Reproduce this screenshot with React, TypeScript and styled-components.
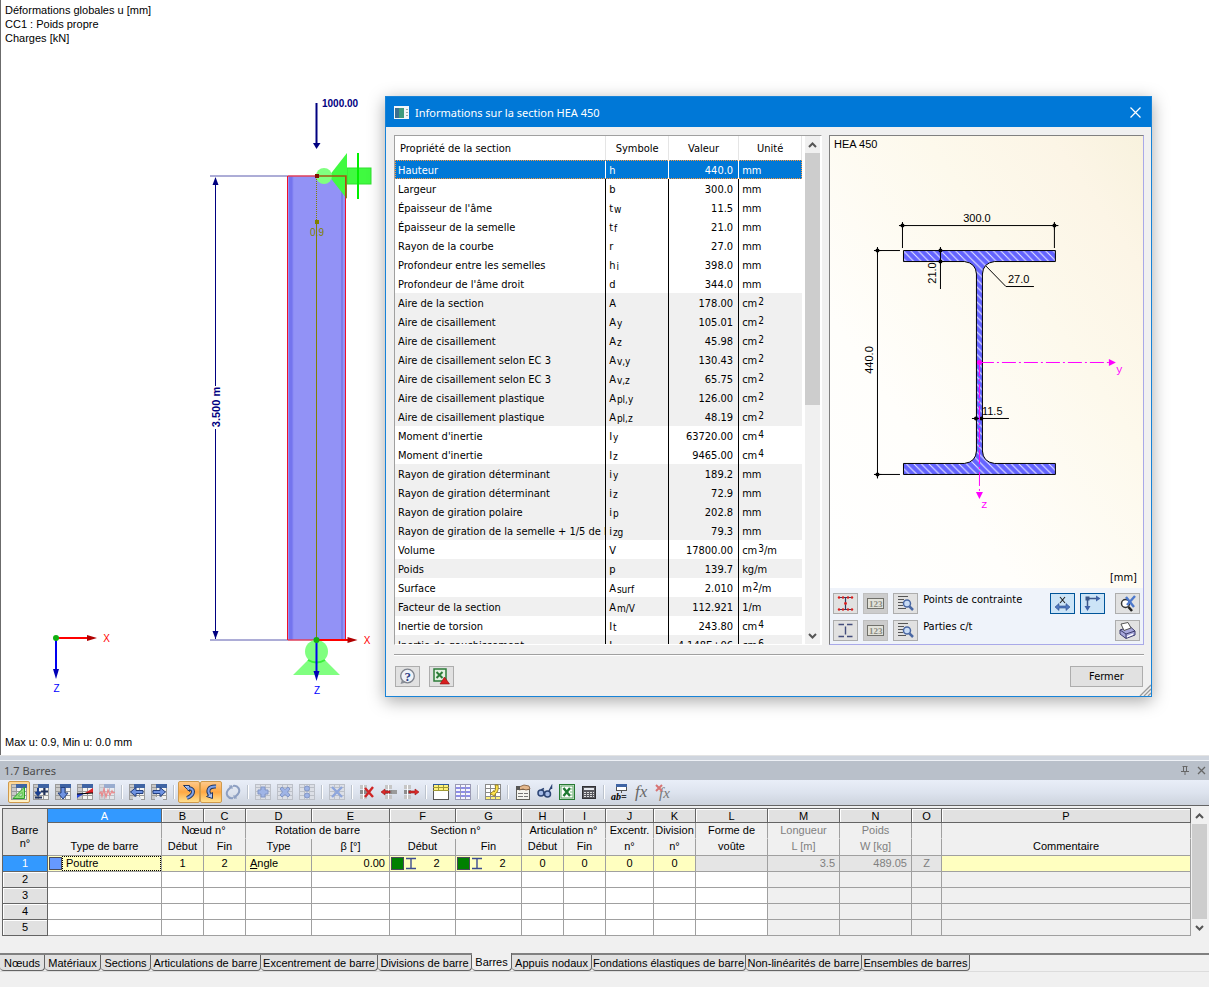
import React from "react";
import styled, { createGlobalStyle, css } from "styled-components";

const uiFont = `"DejaVu Sans Condensed", "Noto Sans", sans-serif`;
const titleFont = `"Noto Sans", "Open Sans", sans-serif`;
const gridFont = `"Liberation Sans", Arial, sans-serif`;

const GlobalStyle = createGlobalStyle`
  *, *::before, *::after { box-sizing: border-box; }
  body { margin: 0; background: #f0f0f0; font-family: ${gridFont}; font-size: 11px; color: #000; }
  button { font: inherit; color: inherit; padding: 0; margin: 0; }
  table { border-collapse: separate; border-spacing: 0; table-layout: fixed; }
  th { font-weight: normal; }
`;

/* ---------- page frame ---------- */

const Shell = styled.div`
  display: flex;
  flex-direction: column;
  min-height: 100vh;
`;

const Workspace = styled.main`
  position: relative;
  flex: 1;
  display: flex;
  flex-direction: column;
  justify-content: space-between;
  min-height: 755px;
  padding: 3px 4px 6px;
  background: #fff;
  border-left: 1px solid #6b6b6b;
`;

const ViewText = styled.p`
  margin: 0;
  line-height: 14px;
  white-space: pre-line;
`;

const ModelView = styled.svg`
  position: absolute;
  left: -1px;
  top: 0;
  font-family: ${gridFont};
  font-size: 11px;
`;

/* ---------- dialog window ---------- */

const Dialog = styled.section`
  position: absolute;
  left: 384px;
  top: 96px;
  width: 767px;
  display: flex;
  flex-direction: column;
  background: #f0f0f0;
  border: 1px solid #1883d7;
  box-shadow: 0 4px 16px rgba(0, 0, 0, 0.35);
  font-family: ${uiFont};
`;

const DialogTitle = styled.header`
  display: flex;
  align-items: center;
  gap: 6px;
  height: 30px;
  padding: 0 8px;
  background: #0078d7;
  color: #fff;
  font-family: ${titleFont};
  h1 {
    flex: 1;
    margin: 0;
    font-size: 11px;
    font-weight: normal;
  }
`;

const BareButton = styled.button<{ $w?: number; $h?: number }>`
  display: flex;
  align-items: center;
  justify-content: center;
  width: ${(p) => p.$w ?? 16}px;
  height: ${(p) => p.$h ?? 16}px;
  border: 0;
  background: none;
`;

const DialogBody = styled.div`
  display: flex;
  gap: 7px;
  height: 518px;
  padding: 8px 7px 0 8px;
`;

const DialogFooter = styled.footer`
  display: flex;
  gap: 9px;
  margin: 9px 7px 0 8px;
  padding: 11px 1px 9px;
  border-top: 1px solid #a0a0a0;
  box-shadow: inset 0 1px 0 #fff;
`;

const Push = styled.span`
  flex: 1;
`;

const ToolButton = styled.button<{ $on?: boolean; $wide?: boolean }>`
  display: flex;
  align-items: center;
  justify-content: center;
  width: ${(p) => (p.$wide ? 73 : 25)}px;
  height: 21px;
  border: 1px solid ${(p) => (p.$on ? "#005499" : "#adadad")};
  background: ${(p) => (p.$on ? "#cce4f7" : "#e1e1e1")};
  &:disabled {
    background: #cccccc;
    border-color: #bfbfbf;
  }
`;

const SizeGrip = styled.svg`
  position: absolute;
  right: 0;
  bottom: 0;
`;

const ListPane = styled.div`
  flex: 428;
  min-width: 0;
  display: flex;
  gap: 3px;
  overflow: hidden;
  padding-right: 1px;
  background: #fff;
  border: 1px solid #fff;
  border-top-color: #a0a0a0;
  border-left-color: #a0a0a0;
`;

const ListClip = styled.div`
  flex: 1;
  min-width: 0;
  overflow: hidden;
`;

const PropTable = styled.table`
  width: 100%;
  th {
    height: 24px;
    padding: 0;
    border-right: 1px solid #e5e5e5;
    text-align: center;
  }
  th:first-child {
    padding-left: 5px;
    text-align: left;
  }
  td {
    height: 19px;
    padding: 2px 5px 0 3px;
    line-height: 14px;
    border-right: 1px solid #000;
    white-space: nowrap;
    overflow: hidden;
  }
  td:first-child {
    padding-right: 0;
  }
  td:nth-child(3) {
    text-align: right;
  }
  td:last-child {
    border-right: 0;
  }
`;

const PropRow = styled.tr<{ $shade?: boolean; $sel?: boolean }>`
  background: ${(p) => (p.$shade ? "#f0f0f0" : "#fff")};
  ${(p) =>
    p.$sel &&
    css`
      background: #0078d7;
      color: #fff;
      outline: 1px dotted #ff9a3c;
      outline-offset: -1px;
      && td {
        border-right-color: #fff;
      }
    `}
`;

const Clip = styled.span`
  display: block;
  overflow: hidden;
`;

const Sub = styled.span`
  margin-left: 1px;
  font-size: 10px;
  line-height: 1px;
  vertical-align: -1px;
`;

const Sup = styled.span`
  margin-left: 1px;
  font-size: 10px;
  line-height: 1px;
  vertical-align: 2px;
`;

const ScrollTrack = styled.div`
  flex: none;
  display: flex;
  flex-direction: column;
  width: 15px;
  background: #f0f0f0;
`;

const ScrollThumb = styled.div<{ $share: number }>`
  flex: ${(p) => p.$share};
  background: #cdcdcd;
`;

const ScrollRest = styled.div<{ $share: number }>`
  flex: ${(p) => p.$share};
`;

const GraphicPane = styled.div`
  flex: 315;
  min-width: 0;
  display: flex;
  flex-direction: column;
  border: 1px solid #a9a9e8;
  border-top-color: #808080;
  border-left-color: #808080;
`;

const Canvas = styled.div`
  flex: 1;
  min-height: 0;
  background: linear-gradient(to top right, #ffffff 0%, #fffefb 30%, #fdf9ec 65%, #fcf5e6 85%, #f8f2de 100%);
  svg {
    display: block;
    width: 100%;
    height: 100%;
  }
`;

const Controls = styled.div`
  display: flex;
  flex-direction: column;
  gap: 6px;
  padding: 5px 3px 3px;
  background: #eff3fa;
`;

const ControlRow = styled.div`
  display: flex;
  gap: 5px;
`;

const ControlLabel = styled.span`
  flex: 1;
  line-height: 13px;
`;

const ControlGap = styled.span`
  width: 0;
`;

/* ---------- table panel ---------- */

const Panel = styled.section`
  flex: none;
  background: #f0f0f0;
`;

const Splitter = styled.div`
  height: 6px;
  background: #cfd5de;
  border-top: 1px solid #e3e3e3;
  border-bottom: 1px solid #eef1f6;
`;

const PanelTitle = styled.header`
  display: flex;
  align-items: center;
  height: 19px;
  padding: 0 0 0 4px;
  background: #b9c0ca;
  color: #4c4c4c;
  font-family: ${titleFont};
  h2 {
    flex: 1;
    margin: 0;
    font-size: 11px;
    font-weight: normal;
  }
`;

const Toolbar = styled.div`
  display: flex;
  align-items: center;
  height: 26px;
  padding: 0 0 1px 8px;
  background: linear-gradient(#e9eef8, #dde3ee 50%, #cdd3dd);
  border-bottom: 1px solid #646464;
`;

const BarButton = styled.button<{ $on?: "pale" | "deep" }>`
  display: flex;
  align-items: center;
  justify-content: center;
  width: 22px;
  height: 22px;
  border: 1px solid transparent;
  border-radius: 2px;
  background: none;
  ${(p) =>
    p.$on &&
    css`
      border-color: #cf9a4c;
      background: ${p.$on === "pale" ? "linear-gradient(#ffd591, #fff3c8)" : "linear-gradient(#ffc98a, #ffa843 50%, #ffe08f)"};
    `}
`;

const BarRule = styled.span`
  width: 2px;
  height: 14px;
  margin: 0 3px;
  background: #bcc3cd;
  border-right: 1px solid #fff;
`;

const GridWrap = styled.div`
  display: flex;
  gap: 1px;
  padding: 2px 2px 0 2px;
`;

const DataGrid = styled.table`
  flex: 1;
  min-width: 0;
  border-left: 1px solid #646464;
  border-top: 1px solid #646464;
  line-height: 13px;
  white-space: nowrap;
  th,
  td {
    height: 16px;
    padding: 0;
    overflow: hidden;
    text-align: center;
    border-right: 1px solid #a0a0a0;
    border-bottom: 1px solid #a0a0a0;
  }
`;

const Letter = styled.th<{ $on?: boolean }>`
  && {
    height: 14px;
    line-height: 12px;
    background: ${(p) => (p.$on ? "#3399ff" : "#e1e1e1")};
    color: ${(p) => (p.$on ? "#fff" : "#000")};
    border-color: #646464;
    box-shadow: inset 1px 1px 0 ${(p) => (p.$on ? "#3399ff" : "#fff")};
  }
`;

const CornerHead = styled.th`
  && {
    padding-top: 10px;
    background: #e1e1e1;
    border-color: #646464;
    white-space: pre-line;
  }
`;

const Head = styled.th<{ $low?: boolean; $dim?: boolean }>`
  && {
    height: ${(p) => (p.$low ? 17 : 16)}px;
    padding-bottom: ${(p) => (p.$low ? 2 : 0)}px;
    background: #f0f0f0;
    color: ${(p) => (p.$dim ? "#808080" : "#000")};
    ${(p) => !p.$low && "border-bottom-color: #f0f0f0;"}
  }
`;

const RowHead = styled.th<{ $on?: boolean }>`
  && {
    background: ${(p) => (p.$on ? "#3399ff" : "#e1e1e1")};
    color: ${(p) => (p.$on ? "#fff" : "#000")};
    border-color: #646464;
    box-shadow: inset 1px 1px 0 ${(p) => (p.$on ? "#3399ff" : "#fff")};
  }
`;

const Cell = styled.td<{ $tone?: "edit" | "lock" | "void"; $right?: boolean }>`
  && {
    background: ${(p) => ({ edit: "#ffffc0", lock: "#e5e5e5", void: "#f0f0f0", blank: "#fff" })[p.$tone ?? "blank"]};
    color: ${(p) => (p.$tone === "lock" ? "#808080" : "#000")};
    ${(p) => p.$right && "text-align: right; padding-right: 4px;"}
  }
`;

const CellFlex = styled.div`
  display: flex;
  align-items: center;
  height: 15px;
`;

const Swatch = styled.span<{ $c: string }>`
  flex: none;
  width: 13px;
  height: 13px;
  margin-left: 1px;
  background: ${(p) => p.$c};
  border: 1px solid #4a4a5a;
`;

const FocusText = styled.span`
  flex: 1;
  height: 15px;
  padding-left: 3px;
  text-align: left;
  border: 1px dotted #000;
`;

const SectionNo = styled.span`
  flex: 1;
`;

const LeftText = styled.div`
  padding-left: 4px;
  text-align: left;
`;

const TabStrip = styled.nav`
  display: flex;
  align-items: flex-start;
  height: 19px;
  margin-top: 17px;
  border-top: 2px solid #808080;
  border-bottom: 1px solid #dcdcdc;
`;

const Tab = styled.button<{ $on?: boolean; $w: number }>`
  flex: none;
  width: ${(p) => p.$w}px;
  height: 16px;
  line-height: 14px;
  text-align: center;
  white-space: nowrap;
  background: ${(p) => (p.$on ? "#f0f0f0" : "#e1e1e1")};
  border: 0;
  border-right: 1px solid #646464;
  border-bottom: 1px solid #646464;
  border-radius: 0 0 4px 4px;
  ${(p) =>
    p.$on &&
    css`
      margin-top: -2px;
      height: 18px;
    `}
`;

const StatusPad = styled.div`
  height: 15px;
`;

/* ---------- icons ---------- */

const Icon = ({ children, w = 16, h = 16 }: { children: React.ReactNode; w?: number; h?: number }) => (
  <svg width={w} height={h} viewBox={`0 0 ${w} ${h}`} aria-hidden="true">
    {children}
  </svg>
);

const Sheet = ({ faded }: { faded?: boolean }) => (
  <g opacity={faded ? 0.45 : 1} shapeRendering="crispEdges">
    <rect x="0" y="0" width="16" height="16" fill="#f4f4f2" />
    <rect x="0" y="0" width="5" height="16" fill="#c9c9c9" />
    <path d="M0 .5H16M0 3.5H16M0 7.5H16M0 11.5H16M0 15.5H16M.5 0V16M5.5 0V16M10.5 3V16M15.5 0V16" stroke="#9a9a9a" fill="none" />
    <rect x="5" y="0" width="11" height="4" fill="#3f64a4" />
  </g>
);

const FadedGrid = () => (
  <g shapeRendering="crispEdges">
    <rect width="16" height="16" fill="#dcdfe6" />
    <path d="M0 .5H16M0 3.5H16M0 7.5H16M0 11.5H16M0 15.5H16M.5 0V16M5.5 0V16M10.5 0V16M15.5 0V16" stroke="#bcc0c8" fill="none" />
  </g>
);

const RowStack = ({ x = 0 }: { x?: number }) => (
  <g shapeRendering="crispEdges">
    <rect x={x} y="1" width="7" height="4" fill="#c6c6c6" />
    <rect x={x} y="6" width="7" height="4" fill="#8d8d8d" />
    <rect x={x} y="11" width="7" height="4" fill="#c6c6c6" />
    <path d={`M${x + 3} 1V15`} stroke="#fff" />
  </g>
);

const blue = { fill: "#6f93e2", stroke: "#24407f" };
const paleBlue = { fill: "#9fb4e6", stroke: "#8296c6" };

const BentArrow = ({ arc, head }: { arc: string; head: string }) => (
  <g strokeLinejoin="round">
    <path d={arc} fill="none" stroke="#24365f" strokeWidth="4" />
    <path d={head} fill="#a9c1f0" stroke="#24365f" />
    <path d={arc} fill="none" stroke="#7fa2e8" strokeWidth="2" />
  </g>
);

const Cycle = () => (
  <g fill="none" stroke="#8d9fc2" strokeWidth="2">
    <path d="M8 14C3 15 0 10 3 6L7 2" />
    <path d="M8 2C13 1 16 6 13 10L9 14" />
    <path d="M4 2H7V5M12 14H9V11" strokeWidth="1" />
  </g>
);

const ExcelMark = () => (
  <g>
    <rect x=".5" y=".5" width="15" height="15" fill="#e8f4e6" stroke="#267a33" />
    <rect x="2" y="2" width="12" height="12" fill="#fff" stroke="#5ba364" />
    <path d="M4.500 4L11 12M11 4L4.500 12" stroke="#1f7a32" strokeWidth="2.400" />
    <path d="M11 5H13.500M11 8H13.500M11 11H13.500" stroke="#7bbd82" />
  </g>
);

const barIcons: Record<string, React.ReactNode> = {
  edit: <><Sheet /><path d="M2 14.500H13.500V3Z" fill="#8fe07a" stroke="#2c9c2c" /><path d="M7.500 12H11V8.500Z" fill="#fff" stroke="#2c9c2c" strokeWidth=".7" /></>,
  insert: <><Sheet /><path d="M5 4V10M2.500 8L5 11L7.500 8" stroke="#1b3f8d" strokeWidth="2" fill="none" /><path d="M2 13.500H9M8 7.500H15M11.500 4V11" stroke="#22345f" strokeWidth="2" /></>,
  down: <><Sheet /><path d="M6 3.500H10V9H13L8 15L3 9H6Z" {...blue} /></>,
  graph: <><Sheet /><path d="M0 14V10L8 9Z" fill="#2646d8" /><path d="M8 9L16 4V9Z" fill="#e0262a" /><path d="M0 10L16 9" stroke="#000" /></>,
  wave: <><Sheet faded /><path d="M0 10L2 8L3 12L5 5L7 13L9 6L11 11L13 7L14 9L16 8" stroke="#e98a8d" strokeWidth="1.300" fill="none" /></>,
  prev: <><Sheet /><rect x="4" y="13" width="8" height="3" fill="#dde3ee" /><path d="M1.500 8L7 3.500V6.500H14V9.500H7V12.500Z" {...blue} /></>,
  next: <><Sheet /><rect x="4" y="13" width="8" height="3" fill="#dde3ee" /><path d="M14.500 8L9 3.500V6.500H2V9.500H9V12.500Z" {...blue} /></>,
  undo: <BentArrow arc="M6 4.500C14 3 14 11 6 14" head="M2.500 1.500H8.500V7.500Z" />,
  redo: <BentArrow arc="M13 2.500C5 2 4 7 7 11" head="M3.500 12.500L9.500 8.500V14.500Z" />,
  cycle: <Cycle />,
  add: <><FadedGrid /><path d="M6 3H10V6H13V10H10V13H6V10H3V6H6Z" {...paleBlue} /></>,
  cross: <><FadedGrid /><path d="M5 3L8 5.500L11 3L13 5L10.500 8L13 11L11 13L8 10.500L5 13L3 11L5.500 8L3 5Z" {...paleBlue} /></>,
  copy: <><FadedGrid /><circle cx="8" cy="4.500" r="2.500" {...paleBlue} /><circle cx="8" cy="11.500" r="2.500" {...paleBlue} /></>,
  clear: <><FadedGrid /><path d="M3 3L13 13M13 3L3 13" stroke="#8ea6dc" strokeWidth="2.400" /></>,
  delRow: <><RowStack x={1} /><path d="M6 4L14 13M14 3L6 13" stroke="#cf2525" strokeWidth="2.400" /></>,
  rowLeft: <><RowStack x={4} /><rect x="11" y="6" width="5" height="4" fill="#9b9b9b" /><path d="M0 8L4 5V7H9V9H4V11Z" fill="#d92a2a" stroke="#9c1515" strokeWidth=".6" /></>,
  rowRight: <><RowStack x={1} /><path d="M16 8L12 5V7H6V9H12V11Z" fill="#d92a2a" stroke="#9c1515" strokeWidth=".6" /></>,
  headRow: <g shapeRendering="crispEdges"><rect width="16" height="16" fill="#fff" /><rect width="16" height="6" fill="#fff27a" /><path d="M.5 0V16M15.500 0V16M0 15.500H16" stroke="#555" /><path d="M0 .5H16" stroke="#2c5aa0" /><path d="M0 3.500H16M0 6.500H16M5.500 1V7M10.500 1V7" stroke="#a09a35" /></g>,
  bands: <g shapeRendering="crispEdges"><rect width="16" height="16" fill="#f6f6ff" /><path d="M0 4H16M0 8H16M0 12H16" stroke="#8e8ee8" strokeWidth="2" /><path d="M0 .5H16M.5 0V16M15.500 0V16M0 15.500H16M5.500 0V16M10.500 0V16" stroke="#9a9ab4" fill="none" /></g>,
  rowPick: <g><g shapeRendering="crispEdges"><rect width="16" height="16" fill="#fff" /><rect y="12" width="16" height="4" fill="#fff27a" /><path d="M0 .5H16M0 4.500H16M0 8.500H16M0 12.500H16M0 15.500H16M.5 0V16M5.500 0V16M10.500 0V16M15.500 0V16" stroke="#8a8a8a" fill="none" /></g><path d="M10 1L13 1C14 6 12 9 10 10V12L5 10L9 6.500V8C10.500 6 11 4 10 1Z" fill="#ffe34d" stroke="#8a7415" strokeWidth=".8" /></g>,
  form: <><rect x="1.500" y="5.500" width="13" height="10" fill="#f5f5ef" stroke="#62625c" /><path d="M3 9.500H8M9 9.500H13M3 12.500H8M9 12.500H13" stroke="#777" /><path d="M4 3L9 1L14 2L15 5L11 6L8 5L4 6Z" fill="#e3b78c" stroke="#7b5636" strokeWidth=".8" /><rect x="1" y="2" width="4" height="4" fill="#555" /></>,
  glasses: <g fill="#a5bce8" stroke="#2c4474" strokeWidth="1.500"><circle cx="4" cy="9" r="3" /><circle cx="10.500" cy="10" r="3" /><path d="M7 8.500L8 9M4 6L7 4.500M12 7L14.500 2.500V5" fill="none" /></g>,
  excel: <ExcelMark />,
  calc: <><rect x="1.500" y="2.500" width="13" height="12" fill="#5a5a60" stroke="#303034" /><rect x="3" y="4" width="10" height="2" fill="#e5e9ee" /><path d="M3 8.500H13M3 10.500H13M3 12.500H13" stroke="#e0e0e0" strokeDasharray="2 1" /></>,
};

const WordIcon = styled.svg`
  overflow: visible;
  font-family: "Liberation Serif", "Times New Roman", serif;
  font-style: italic;
`;

const formulaIcons: Record<string, React.ReactNode> = {
  vars: (
    <WordIcon width="16" height="16" viewBox="0 0 16 16">
      <rect x="5.500" y=".5" width="10" height="6" fill="#fff" stroke="#555" />
      <rect x="5" y="0" width="11" height="3" fill="#3f64a4" />
      <path d="M10.500 6V9" stroke="#555" />
      <text x="0" y="16" fontSize="10" fontWeight="bold">ab=</text>
    </WordIcon>
  ),
  fx: (
    <WordIcon width="16" height="16" viewBox="0 0 16 16">
      <text x="2" y="13" fontSize="17" fill="#666">fx</text>
    </WordIcon>
  ),
  fxOff: (
    <WordIcon width="16" height="16" viewBox="0 0 16 16">
      <text x="4" y="14" fontSize="15" fill="#777">fx</text>
      <path d="M1 1L7 7M7 1L1 7" stroke="#d77474" strokeWidth="2" />
    </WordIcon>
  ),
};

const Chevron = ({ up }: { up?: boolean }) => (
  <Icon w={9} h={6}>
    <path d={up ? "M1 5L4.500 1.500L8 5" : "M1 1L4.500 4.500L8 1"} fill="none" stroke="#555" strokeWidth="2" />
  </Icon>
);

const Lens = () => (
  <g>
    <circle cx="10" cy="8.500" r="3.500" fill="#c9dcf5" stroke="#4a68a3" strokeWidth="1.500" />
    <path d="M12.500 11.500L16 15" stroke="#4a68a3" strokeWidth="2.500" />
  </g>
);

const FindIcon = () => (
  <Icon w={17} h={17}>
    <path d="M1 1.500H11M1 4.500H7M1 7.500H6M1 10.500H6M1 13.500H9" stroke="#555" />
    <Lens />
  </Icon>
);

const NumberIcon = () => (
  <svg width="17" height="11" viewBox="0 0 17 11" fontFamily="Liberation Serif, serif" fontSize="9" fontWeight="bold">
    <rect x=".5" y=".5" width="16" height="10" fill="#e2e2da" stroke="#70706a" />
    <text x="2" y="9" fill="#8a8a80">123</text>
  </svg>
);

/* ---------- property list ---------- */

type Prop = [name: string, sym: string, sub: string, value: string, unit: string, exp: string, rest: string, shade: number];

const properties: Prop[] = [
  ["Hauteur", "h", "", "440.0", "mm", "", "", 0],
  ["Largeur", "b", "", "300.0", "mm", "", "", 0],
  ["Épaisseur de l'âme", "t", "w", "11.5", "mm", "", "", 0],
  ["Épaisseur de la semelle", "t", "f", "21.0", "mm", "", "", 0],
  ["Rayon de la courbe", "r", "", "27.0", "mm", "", "", 0],
  ["Profondeur entre les semelles", "h", "i", "398.0", "mm", "", "", 0],
  ["Profondeur de l'âme droit", "d", "", "344.0", "mm", "", "", 0],
  ["Aire de la section", "A", "", "178.00", "cm", "2", "", 1],
  ["Aire de cisaillement", "A", "y", "105.01", "cm", "2", "", 1],
  ["Aire de cisaillement", "A", "z", "45.98", "cm", "2", "", 1],
  ["Aire de cisaillement selon EC 3", "A", "v,y", "130.43", "cm", "2", "", 1],
  ["Aire de cisaillement selon EC 3", "A", "v,z", "65.75", "cm", "2", "", 1],
  ["Aire de cisaillement plastique", "A", "pl,y", "126.00", "cm", "2", "", 1],
  ["Aire de cisaillement plastique", "A", "pl,z", "48.19", "cm", "2", "", 1],
  ["Moment d'inertie", "I", "y", "63720.00", "cm", "4", "", 0],
  ["Moment d'inertie", "I", "z", "9465.00", "cm", "4", "", 0],
  ["Rayon de giration déterminant", "i", "y", "189.2", "mm", "", "", 1],
  ["Rayon de giration déterminant", "i", "z", "72.9", "mm", "", "", 1],
  ["Rayon de giration polaire", "i", "p", "202.8", "mm", "", "", 1],
  ["Rayon de giration de la semelle + 1/5 de la", "i", "zg", "79.3", "mm", "", "", 1],
  ["Volume", "V", "", "17800.00", "cm", "3", "/m", 0],
  ["Poids", "p", "", "139.7", "kg/m", "", "", 1],
  ["Surface", "A", "surf", "2.010", "m", "2", "/m", 0],
  ["Facteur de la section", "A", "m/V", "112.921", "1/m", "", "", 1],
  ["Inertie de torsion", "I", "t", "243.80", "cm", "4", "", 0],
  ["Inertie de gauchissement", "I", "ω", "4.148E+06", "cm", "6", "", 1],
];

function PropertyList() {
  return (
    <ListPane>
      <ListClip>
        <PropTable>
          <colgroup>
            <col />
            <col width="63" />
            <col width="70" />
            <col width="63" />
          </colgroup>
          <thead>
            <tr>
              <th>Propriété de la section</th>
              <th>Symbole</th>
              <th>Valeur</th>
              <th>Unité</th>
            </tr>
          </thead>
          <tbody>
            {properties.map(([name, sym, sub, value, unit, exp, rest, shade], i) => (
              <PropRow key={i} $shade={!!shade} $sel={i === 0}>
                <td><Clip>{name}</Clip></td>
                <td>{sym}{sub && <Sub>{sub}</Sub>}</td>
                <td>{value}</td>
                <td>{unit}{exp && <Sup>{exp}</Sup>}{rest}</td>
              </PropRow>
            ))}
          </tbody>
        </PropTable>
      </ListClip>
      <ScrollTrack>
        <BareButton $w={15} $h={17} aria-label="Défiler vers le haut"><Chevron up /></BareButton>
        <ScrollThumb $share={252} />
        <ScrollRest $share={222} />
        <BareButton $w={15} $h={17} aria-label="Défiler vers le bas"><Chevron /></BareButton>
      </ScrollTrack>
    </ListPane>
  );
}

/* ---------- section drawing ---------- */

const Node = ({ x, y }: { x: number; y: number }) => (
  <g>
    <path d={`M${x - 3} ${y}H${x + 4}M${x} ${y - 3}V${y + 4}`} stroke="#000" />
    <circle cx={x} cy={y} r="2" />
  </g>
);

const profile =
  "M903.5 250.5H1055.5V261.5H994.5Q983 263 982.500 274V451Q983 462 994.500 463.500H1055.5V474.5H903.500V463.500H964.500Q976 462 976.500 451V274Q976 263 964.500 261.500H903.500Z";

function SectionDrawing() {
  return (
    <svg viewBox="830 136 313 452" fontFamily={gridFont} fontSize="11" role="img" aria-label="HEA 450">
      <defs>
        <pattern id="hatch" width="7.500" height="7.500" patternUnits="userSpaceOnUse">
          <rect width="7.500" height="7.500" fill="#6464ff" />
          <path d="M-1 -1L8.500 8.500M-1 6.500L1 8.500M6.500 -1L8.500 1" stroke="#ececff" strokeWidth="1" />
        </pattern>
      </defs>
      <text x="834" y="148">HEA 450</text>
      <path d={profile} fill="url(#hatch)" stroke="#000" />
      <g fill="none" stroke="#000">
        <path d="M899 225.500H1058M902.500 222V248M1054.500 222V248" />
        <path d="M877.500 247V478M874 250.500H900M874 474.500H900" />
        <path d="M940.500 247V289" />
        <path d="M986 266L1006 286.500H1034" />
        <path d="M972 418.500H1009" />
      </g>
      <Node x={902.5} y={225.5} />
      <Node x={1054.5} y={225.5} />
      <Node x={877.5} y={250.5} />
      <Node x={877.5} y={474.5} />
      <Node x={940.5} y={250.5} />
      <Node x={940.5} y={261.5} />
      <circle cx="976" cy="418.500" r="2" />
      <circle cx="981.500" cy="418.500" r="2" />
      <text x="977" y="222" textAnchor="middle">300.0</text>
      <text transform="translate(873 360) rotate(-90)" textAnchor="middle">440.0</text>
      <text transform="translate(936 273) rotate(-90)" textAnchor="middle">21.0</text>
      <text x="1008" y="283">27.0</text>
      <text x="982" y="415">11.5</text>
      <g stroke="#ff00ff" fill="none">
        <path d="M980 362.500H1109" strokeDasharray="14 3 2 3" />
        <path d="M979.500 362V492" strokeDasharray="14 3 2 3" />
      </g>
      <g fill="#ff00ff" fontFamily="Liberation Mono, monospace">
        <circle cx="979.500" cy="362.500" r="2.500" />
        <path d="M1109 359V366L1116 362.500ZM976 492H983L979.500 499Z" />
        <text x="1116" y="373">y</text>
        <text x="981" y="508">z</text>
      </g>
      <text x="1137" y="581" textAnchor="end" fontFamily={uiFont}>[mm]</text>
    </svg>
  );
}

function SectionDialog() {
  return (
    <Dialog role="dialog" aria-label="Informations sur la section HEA 450">
      <DialogTitle>
        <Icon w={15} h={13}>
          <rect width="15" height="13" fill="#f3f5f7" />
          <rect x="1" y="2" width="9" height="10" fill="#3f9a7c" />
          <rect x="1" y="2" width="4" height="10" fill="#3b6f8f" />
          <path d="M12 3.500H14M12 6.500H14M12 9.500H14" stroke="#9aa" />
        </Icon>
        <h1>Informations sur la section HEA 450</h1>
        <BareButton aria-label="Quitter">
          <Icon w={11} h={11}><path d="M.5 .5L10.500 10.500M10.500 .5L.5 10.500" stroke="#fff" strokeWidth="1.200" /></Icon>
        </BareButton>
      </DialogTitle>
      <DialogBody>
        <PropertyList />
        <GraphicPane>
          <Canvas><SectionDrawing /></Canvas>
          <Controls>
            <ControlRow>
              <ToolButton aria-label="Afficher les points de contrainte">
                <Icon w={17} h={17}>
                  <path d="M2 2.500H15M2 14.500H15M8.500 2V15" stroke="#333a5c" strokeWidth="1.200" />
                  <g fill="#d81e1e">{[2, 6, 11, 15].map((x) => <React.Fragment key={x}><circle cx={x} cy="2.500" r="1.200" /><circle cx={x} cy="14.500" r="1.200" /></React.Fragment>)}<circle cx="8.500" cy="8.500" r="1.400" /></g>
                </Icon>
              </ToolButton>
              <ToolButton disabled aria-label="Numéros des points"><NumberIcon /></ToolButton>
              <ToolButton aria-label="Détails des points"><FindIcon /></ToolButton>
              <ControlLabel>Points de contrainte</ControlLabel>
              <ToolButton $on aria-label="Cotes">
                <Icon w={17} h={17}>
                  <path d="M6 2L11 8M11 2L6 8" stroke="#222" strokeWidth="1.100" />
                  <path d="M1 12L5 8.500V11H12V8.500L16 12L12 15.500V13H5V15.500Z" fill="#4f78c0" stroke="#2d4d8a" strokeWidth=".6" />
                </Icon>
              </ToolButton>
              <ToolButton $on aria-label="Axes">
                <Icon w={17} h={17}>
                  <path d="M3.500 14V3.500H14" fill="none" stroke="#3b5688" strokeWidth="1.500" />
                  <path d="M12 .5L16.500 3.500L12 6.500ZM.5 11L3.500 16L6.500 11Z" fill="#3f62a6" />
                  <rect x="1.500" y="1.500" width="4" height="4" fill="#3b5688" />
                </Icon>
              </ToolButton>
              <ControlGap />
              <ToolButton aria-label="Zoom initial">
                <Icon w={17} h={17}>
                  <circle cx="6.500" cy="8.500" r="4" fill="#fff" stroke="#333" strokeWidth="1.500" />
                  <path d="M9.500 12L13 16" stroke="#222" strokeWidth="2.500" />
                  <path d="M7 2L15 12M16 1L8 10" stroke="#4c78cc" strokeWidth="2.400" />
                </Icon>
              </ToolButton>
            </ControlRow>
            <ControlRow>
              <ToolButton aria-label="Afficher les parties c/t">
                <Icon w={17} h={17}><path d="M1.500 2.500H7M10 2.500H15.500M1.500 14.500H7M10 14.500H15.500M8.500 4.500V12.500" fill="none" stroke="#434d7c" strokeWidth="1.400" /></Icon>
              </ToolButton>
              <ToolButton disabled aria-label="Numéros des parties"><NumberIcon /></ToolButton>
              <ToolButton aria-label="Détails des parties"><FindIcon /></ToolButton>
              <ControlLabel>Parties c/t</ControlLabel>
              <ToolButton aria-label="Imprimer">
                <Icon w={17} h={17}>
                  <path d="M1 8L11 4.500L16 9V13L7 16.500L1 12Z" fill="#a9a9dc" stroke="#3c3c6c" />
                  <path d="M1 8L7 12L16 9M7 12V16" fill="none" stroke="#3c3c6c" />
                  <path d="M2 2L9 .5L12 6L5 8.500Z" fill="#fff" stroke="#555" />
                  <path d="M8 14L14 11.500V13L8 15.500Z" fill="#fff" />
                </Icon>
              </ToolButton>
            </ControlRow>
          </Controls>
        </GraphicPane>
      </DialogBody>
      <DialogFooter>
        <ToolButton aria-label="Aide">
          <svg width="17" height="17" viewBox="0 0 17 17" fontFamily="Liberation Serif, serif" fontSize="13" fontWeight="bold">
            <circle cx="8.500" cy="8" r="6.800" fill="#eef2f8" stroke="#7d828c" strokeWidth="1.300" />
            <path d="M3 12L1.500 16L7 14.500Z" fill="#8a8f98" />
            <text x="5.500" y="12.500" fill="#2c3f86">?</text>
          </svg>
        </ToolButton>
        <ToolButton aria-label="Exporter vers Excel">
          <Icon w={17} h={17}>
            <rect x="1" y="1" width="12" height="12" fill="#e4f1e2" stroke="#2c7c38" strokeWidth="1.500" />
            <path d="M3.500 4L9.500 10M9.500 4L3.500 10" stroke="#2c7c38" strokeWidth="2" />
            <path d="M7 16L11.500 9L16.500 16Z" fill="#d81f1f" stroke="#8f1010" strokeWidth=".6" />
          </Icon>
        </ToolButton>
        <Push />
        <ToolButton $wide>Fermer</ToolButton>
      </DialogFooter>
      <SizeGrip width="12" height="12" viewBox="0 0 12 12"><path d="M1 12L12 1M5 12L12 5M9 12L12 9" stroke="#9a9a9a" strokeWidth="1.300" /></SizeGrip>
    </Dialog>
  );
}

/* ---------- structural model ---------- */

function Model() {
  return (
    <ModelView width="385" height="750" viewBox="0 0 385 750" role="img" aria-label="Modèle">
      <g stroke="#000080" fill="none">
        <path d="M210 176H288M210 640H288" stroke="#5a5aae" />
        <path d="M215.500 178V386M215.500 429V639" />
      </g>
      <path d="M212.500 185H218.500L215.500 177ZM212.500 631H218.500L215.500 639Z" fill="#000080" />
      <text transform="translate(220 407) rotate(-90)" textAnchor="middle" fontWeight="bold" fill="#000080">3.500 m</text>

      <rect x="287.500" y="176" width="58" height="464" fill="#9292f6" />
      <rect x="289" y="176" width="4" height="464" fill="#7474ee" />
      <path d="M342 176V640" stroke="#7474e4" strokeWidth="1.500" />
      <path d="M293 176V640" stroke="#8888f4" />

      <g>
        <rect x="347" y="168" width="24" height="16" fill="#40fa40" stroke="#30e030" />
        <path d="M329 176L347 153V199Z" fill="#40fa40" />
        <path d="M358 153V199" stroke="#00f000" strokeWidth="2" />
        <circle cx="324" cy="176" r="8" fill="#80ff80" />
      </g>
      <path d="M287.500 640V176" fill="none" stroke="#f01028" />
      <path d="M345.500 176V640" fill="none" stroke="#f01028" />
      <path d="M288 176H317M288 640H346" stroke="#e0405c" strokeWidth="1.500" />
      <path d="M317 176H346V198" fill="none" stroke="#a05a10" strokeWidth="1.500" />

      <g stroke="#808000">
        <path d="M316.500 177V220" strokeDasharray="1 1" />
        <path d="M316.500 221V640" />
      </g>
      <rect x="315" y="220" width="4" height="4" fill="#808000" />
      <text x="317" y="236" textAnchor="middle" fontSize="10" fill="#808000">0.9</text>
      <rect x="315" y="174" width="4" height="4" fill="#801000" />

      <path d="M316.500 103V144" stroke="#000080" strokeWidth="2" />
      <path d="M313 143H320.500L316.500 149Z" fill="#000080" />
      <text x="322" y="107" fontSize="10" fontWeight="bold" fill="#000080">1000.00</text>

      <circle cx="316.500" cy="651.500" r="11.500" fill="#80ff80" />
      <path d="M308 660L293 675H340L325 660Q316.500 665 308 660Z" fill="#80ff80" />
      <path d="M308 660Q316.500 665 325 660" fill="none" stroke="#38f038" strokeWidth="2" />

      {[{ x: 316.5, y: 640 }, { x: 56, y: 638 }].map(({ x, y }) => (
        <g key={x}>
          <path d={`M${x} ${y}H${x + 33}`} stroke="#ff0000" strokeWidth="2" />
          <path d={`M${x + 31} ${y - 3}V${y + 3}L${x + 41} ${y}Z`} fill="#b00000" />
          <path d={`M${x} ${y}V${y + 33}`} stroke="#0000f0" strokeWidth="2" />
          <path d={`M${x - 3} ${y + 31}H${x + 3}L${x} ${y + 41}Z`} fill="#0000b8" />
          <circle cx={x} cy={y} r="3" fill="#10b010" />
          <text x={x + 50.5} y={y + 4} textAnchor="middle" fontSize="10" fill="#ff0000">X</text>
          <text x={x + 0.5} y={y + 54} textAnchor="middle" fontSize="10" fill="#0000ff">Z</text>
        </g>
      ))}
    </ModelView>
  );
}

/* ---------- bottom table ---------- */

const toolGroups: { name: string; label: string; on?: "pale" | "deep" }[][] = [
  [
    { name: "edit", label: "Mode édition", on: "pale" },
    { name: "insert", label: "Insérer" },
    { name: "down", label: "Remplir" },
    { name: "graph", label: "Graphique" },
    { name: "wave", label: "Courbe" },
  ],
  [{ name: "prev", label: "Tableau précédent" }, { name: "next", label: "Tableau suivant" }],
  [
    { name: "undo", label: "Sélection vers le graphique", on: "deep" },
    { name: "redo", label: "Sélection depuis le graphique", on: "deep" },
    { name: "cycle", label: "Actualiser" },
  ],
  [{ name: "add", label: "Ajouter" }, { name: "cross", label: "Multiplier" }, { name: "copy", label: "Diviser" }],
  [{ name: "clear", label: "Vider" }],
  [{ name: "delRow", label: "Supprimer la ligne" }, { name: "rowLeft", label: "Insérer une ligne" }, { name: "rowRight", label: "Extraire la ligne" }],
  [{ name: "headRow", label: "En-tête" }, { name: "bands", label: "Bandes" }],
  [{ name: "rowPick", label: "Ligne active" }],
  [{ name: "form", label: "Paramètres" }, { name: "glasses", label: "Voir" }, { name: "excel", label: "Excel" }, { name: "calc", label: "Calculatrice" }],
  [{ name: "vars", label: "Paramètres de formule" }, { name: "fx", label: "Formule" }, { name: "fxOff", label: "Supprimer la formule" }],
];

const columnWidths = [45, 114, 42, 42, 66, 78, 66, 66, 42, 42, 48, 42, 72, 72, 72, 30];
const letters = "ABCDEFGHIJKLMNOP".split("");
const tabs: [string, number][] = [
  ["Nœuds", 45],
  ["Matériaux", 56],
  ["Sections", 50],
  ["Articulations de barre", 110],
  ["Excentrement de barre", 117],
  ["Divisions de barre", 94],
  ["Barres", 40],
  ["Appuis nodaux", 80],
  ["Fondations élastiques de barre", 154],
  ["Non-linéarités de barre", 116],
  ["Ensembles de barres", 108],
];

const SectionCell = () => (
  <Cell $tone="edit">
    <CellFlex>
      <Swatch $c="#008000" />
      <Icon w={14} h={13}><path d="M2 1.500H12M2 11.500H12M7 1.500V11.500" stroke="#3c4c90" strokeWidth="1.400" /></Icon>
      <SectionNo>2</SectionNo>
    </CellFlex>
  </Cell>
);

function MemberGrid() {
  return (
    <GridWrap>
      <DataGrid>
        <colgroup>
          {columnWidths.map((w, i) => <col key={i} width={w} />)}
          <col />
        </colgroup>
        <thead>
          <tr>
            <CornerHead rowSpan={3}>{"Barre\nn°"}</CornerHead>
            {letters.map((l) => <Letter key={l} $on={l === "A"}>{l}</Letter>)}
          </tr>
          <tr>
            <Head />
            <Head colSpan={2}>Nœud n°</Head>
            <Head colSpan={2}>Rotation de barre</Head>
            <Head colSpan={2}>Section n°</Head>
            <Head colSpan={2}>Articulation n°</Head>
            <Head>Excentr.</Head>
            <Head>Division</Head>
            <Head>Forme de</Head>
            <Head $dim>Longueur</Head>
            <Head $dim>Poids</Head>
            <Head />
            <Head />
          </tr>
          <tr>
            <Head $low>Type de barre</Head>
            <Head $low>Début</Head>
            <Head $low>Fin</Head>
            <Head $low>Type</Head>
            <Head $low>β [°]</Head>
            <Head $low>Début</Head>
            <Head $low>Fin</Head>
            <Head $low>Début</Head>
            <Head $low>Fin</Head>
            <Head $low>n°</Head>
            <Head $low>n°</Head>
            <Head $low>voûte</Head>
            <Head $low $dim>L [m]</Head>
            <Head $low $dim>W [kg]</Head>
            <Head $low />
            <Head $low>Commentaire</Head>
          </tr>
        </thead>
        <tbody>
          <tr>
            <RowHead $on>1</RowHead>
            <Cell $tone="edit"><CellFlex><Swatch $c="#6699ff" /><FocusText>Poutre</FocusText></CellFlex></Cell>
            <Cell $tone="edit">1</Cell>
            <Cell $tone="edit">2</Cell>
            <Cell $tone="edit"><LeftText><u>A</u>ngle</LeftText></Cell>
            <Cell $tone="edit" $right>0.00</Cell>
            <SectionCell />
            <SectionCell />
            <Cell $tone="edit">0</Cell>
            <Cell $tone="edit">0</Cell>
            <Cell $tone="edit">0</Cell>
            <Cell $tone="edit">0</Cell>
            <Cell $tone="lock" />
            <Cell $tone="lock" $right>3.5</Cell>
            <Cell $tone="lock" $right>489.05</Cell>
            <Cell $tone="lock">Z</Cell>
            <Cell $tone="edit" />
          </tr>
          {[2, 3, 4, 5].map((n) => (
            <tr key={n}>
              <RowHead>{n}</RowHead>
              {letters.map((l) => <Cell key={l} $tone={l > "L" ? "void" : undefined} />)}
            </tr>
          ))}
        </tbody>
      </DataGrid>
      <ScrollTrack>
        <BareButton $w={15} $h={16} aria-label="Défiler vers le haut"><Chevron up /></BareButton>
        <ScrollThumb $share={1} />
        <BareButton $w={15} $h={17} aria-label="Défiler vers le bas"><Chevron /></BareButton>
      </ScrollTrack>
    </GridWrap>
  );
}

export default function App() {
  return (
    <>
      <GlobalStyle />
      <Shell>
        <Workspace>
          <Model />
          <ViewText>{"Déformations globales u [mm]\nCC1 : Poids propre\nCharges [kN]"}</ViewText>
          <ViewText>Max u: 0.9, Min u: 0.0 mm</ViewText>
          <SectionDialog />
        </Workspace>
        <Panel>
          <Splitter />
          <PanelTitle>
            <h2>1.7 Barres</h2>
            <BareButton aria-label="Épingler">
              <Icon w={8} h={9}><path d="M1.500 .5H6.500M2.500 .5V5M5.500 .5V5M0 5.500H8M4 6V9" fill="none" stroke="#666" /></Icon>
            </BareButton>
            <BareButton aria-label="Masquer">
              <Icon w={9} h={9}><path d="M1 1L8 8M8 1L1 8" stroke="#666" strokeWidth="1.300" /></Icon>
            </BareButton>
          </PanelTitle>
          <Toolbar>
            {toolGroups.map((group, g) => (
              <React.Fragment key={g}>
                {g > 0 && <BarRule />}
                {group.map((t) => (
                  <BarButton key={t.name} $on={t.on} aria-label={t.label}>
                    {formulaIcons[t.name] ?? <Icon>{barIcons[t.name]}</Icon>}
                  </BarButton>
                ))}
              </React.Fragment>
            ))}
          </Toolbar>
          <MemberGrid />
          <TabStrip>
            {tabs.map(([t, w]) => <Tab key={t} $w={w} $on={t === "Barres"}>{t}</Tab>)}
          </TabStrip>
          <StatusPad />
        </Panel>
      </Shell>
    </>
  );
}
